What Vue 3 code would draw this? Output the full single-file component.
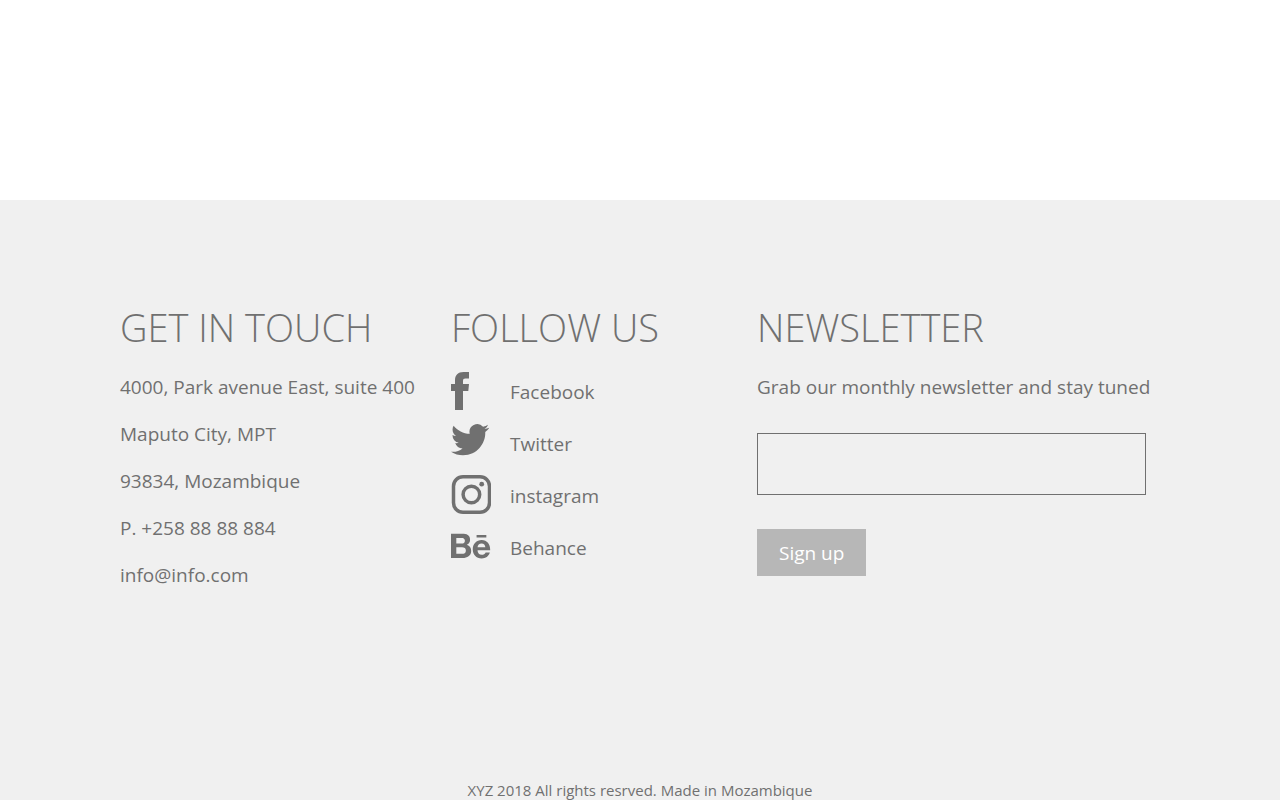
<script setup>
import { ref } from 'vue'

const email = ref('')
const address = [
  '4000, Park avenue East, suite 400',
  'Maputo City, MPT',
  '93834, Mozambique',
  'P. +258 88 88 884',
]
</script>

<template>
  <div class="page">
    <footer class="footer">
      <div class="columns">
        <section>
          <h2>GET IN TOUCH</h2>
          <address>
            <p v-for="line in address" :key="line">{{ line }}</p>
            <p><a href="mailto:info@info.com">info@info.com</a></p>
          </address>
        </section>

        <section>
          <h2>FOLLOW US</h2>
          <ul class="social">
            <li>
              <a href="#facebook">
                <svg viewBox="0 0 40 40" aria-hidden="true">
                  <path d="M4 39V20H0V13H4V9.500C4 4 7 1 12.500 1H18V7.500H14.500C12.500 7.500 12 8.300 12 10V13H18L17.300 20H12V39Z" />
                </svg>
                <span>Facebook</span>
              </a>
            </li>
            <li>
              <a href="#twitter">
                <svg viewBox="0 0 40 40" aria-hidden="true">
                  <path transform="translate(0 -2.400) scale(1.590)" d="M23.953 4.570a10 10 0 01-2.825.775 4.958 4.958 0 002.163-2.723c-.951.555-2.005.959-3.127 1.184a4.920 4.920 0 00-8.384 4.482C7.690 8.095 4.067 6.130 1.640 3.162a4.822 4.822 0 00-.666 2.475c0 1.710.870 3.213 2.188 4.096a4.904 4.904 0 01-2.228-.616v.060a4.923 4.923 0 003.946 4.827 4.996 4.996 0 01-2.212.085 4.936 4.936 0 004.604 3.417 9.867 9.867 0 01-6.102 2.105c-.390 0-.779-.023-1.170-.067a13.995 13.995 0 007.557 2.209c9.053 0 13.998-7.496 13.998-13.985 0-.210 0-.420-.015-.630A9.935 9.935 0 0024 4.590z" />
                </svg>
                <span>Twitter</span>
              </a>
            </li>
            <li>
              <a href="#instagram">
                <svg viewBox="0 0 40 40" aria-hidden="true">
                  <rect class="line" x="2.500" y="1.800" width="36" height="35.500" rx="9.500" />
                  <circle class="line" cx="20.400" cy="19.500" r="8.300" />
                  <circle cx="30.700" cy="9.200" r="2.400" />
                </svg>
                <span>instagram</span>
              </a>
            </li>
            <li>
              <a href="#behance">
                <svg viewBox="0 0 40 40" aria-hidden="true">
                  <path transform="translate(0 1.700) scale(0.068)" d="M232 237.200c31.800-15.200 48.400-38.200 48.400-74 0-70.600-52.600-87.800-113.300-87.800H0v354.400h171.800c64.400 0 124.900-30.900 124.900-102.900 0-44.500-21.100-77.400-64.700-89.700zM77.900 135.900H151c28.100 0 53.400 7.900 53.400 40.500 0 30.100-19.700 42.200-47.500 42.200h-79v-82.700zm83.300 233.700H77.900V272h84.900c34.300 0 56 14.300 56 50.600 0 35.800-25.900 47-57.600 47zm358.500-240.700H376V94h143.700v34.900zM576 305.200c0-75.900-44.400-139.200-124.900-139.200-78.200 0-131.300 58.800-131.300 135.800 0 79.900 50.300 134.700 131.300 134.700 61.300 0 101-27.600 120.100-86.300H509c-6.700 21.900-34.300 33.500-55.700 33.500-41.300 0-63-24.200-63-65.300h185.100c.3-4.200.6-8.700.6-13.200zM390.400 274c2.300-33.700 24.700-54.800 58.500-54.800 35.400 0 53.200 20.800 56.200 54.800H390.400z" />
                </svg>
                <span>Behance</span>
              </a>
            </li>
          </ul>
        </section>

        <section>
          <h2>NEWSLETTER</h2>
          <form @submit.prevent>
            <label for="email">Grab our monthly newsletter and stay tuned</label>
            <input id="email" v-model="email" type="email" />
            <button type="submit">Sign up</button>
          </form>
        </section>
      </div>
      <p class="copyright">XYZ 2018 All rights resrved. Made in Mozambique</p>
    </footer>
  </div>
</template>

<style>
body {
  margin: 0;
  background: #fff;
}
</style>

<style scoped>
.page {
  padding-top: 200px;
  font-family: "Segoe UI", "Open Sans", "Noto Sans", sans-serif;
  font-size: 19px;
  line-height: 29px;
  color: #707070;
}
.footer {
  background: #f0f0f0;
  padding-top: 100px;
}
.columns {
  display: grid;
  grid-template-columns: 331fr 306fr 389fr;
  padding: 0 134px 188px 120px;
  white-space: nowrap;
}
.columns > section {
  min-width: 0;
}
h2 {
  margin: 0 0 19px;
  font-size: 38px;
  line-height: 54px;
  font-weight: 300;
}
address {
  display: grid;
  gap: 18px;
  font-style: normal;
}
p {
  margin: 0;
}
a {
  color: inherit;
  text-decoration: none;
}
.social {
  display: grid;
  gap: 12px;
  margin: -2px 0 0;
  padding: 0;
  list-style: none;
}
.social a {
  display: flex;
  align-items: center;
  gap: 19px;
}
.social span {
  padding-top: 2px;
}
.social svg {
  width: 40px;
  height: 40px;
  fill: #707070;
}
.social .line {
  fill: none;
  stroke: #707070;
  stroke-width: 3.500;
}
form {
  display: flex;
  flex-direction: column;
  align-items: flex-start;
}
input {
  box-sizing: border-box;
  width: 100%;
  height: 62px;
  margin: 31px 0 34px;
  padding: 0 20px;
  border: 1px solid #707070;
  border-radius: 0;
  background: transparent;
  font: inherit;
  color: inherit;
}
button {
  padding: 10px 22px 8px;
  border: 0;
  background: #b7b7b7;
  color: #fff;
  font: inherit;
}
.copyright {
  text-align: center;
  font-size: 15px;
  line-height: 24px;
}
</style>
